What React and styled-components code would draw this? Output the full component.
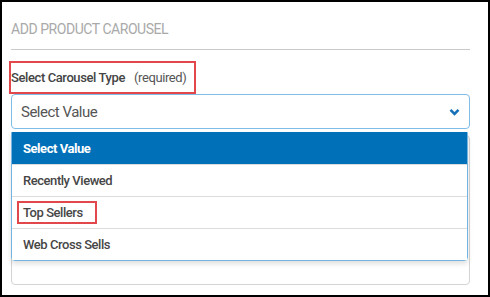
import styled, { createGlobalStyle } from 'styled-components';

const GlobalStyle = createGlobalStyle`
  body {
    margin: 0;
    font-family: Roboto, "Liberation Sans", sans-serif;
    background: #fff;
  }
`;

const Frame = styled.section`
  box-sizing: border-box;
  width: 490px;
  height: 297px;
  border: 2px solid #000;
  padding: 17px 18px 0 9px;
  background: #fff;
`;

const Title = styled.h3`
  margin: 0;
  padding-bottom: 10px;
  border-bottom: 1px solid #c9c9c9;
  font-size: 14px;
  line-height: 20px;
  font-weight: 400;
  letter-spacing: -0.45px;
  color: #a9a9a9;
  text-transform: uppercase;
`;

const Field = styled.div`
  position: relative;
  margin-top: 11px;
`;

const Marked = styled.span`
  display: inline-block;
  border: 2px solid #e2474b;
  padding: ${(p) => p.$pad || '0 8px 0 0'};
  margin-left: ${(p) => p.$shift || '-2px'};
`;

const Label = styled.label`
  display: block;
  font-size: 13px;
  line-height: 29px;
  font-weight: 500;
  letter-spacing: -0.4px;
  color: #444;

  small {
    font-size: 13px;
    font-weight: 400;
    color: #555;
    margin-left: 9px;
  }
`;

const SelectWrap = styled.div`
  position: relative;
`;

const SelectBox = styled.div`
  box-sizing: border-box;
  height: 35px;
  display: flex;
  align-items: center;
  justify-content: space-between;
  padding: 0 9px;
  border: 1px solid #80bde6;
  border-radius: 4px;
  font-size: 15px;
  letter-spacing: -0.5px;
  color: #555;
`;

const Menu = styled.ul`
  position: absolute;
  top: calc(100% + 3px);
  left: 0;
  right: 2px;
  margin: 0;
  padding: 0;
  list-style: none;
  background: #fff;
  border: 1px solid #74b4e0;
  border-radius: 0 0 4px 4px;
  box-shadow: 0 3px 5px rgba(0, 0, 0, 0.12);
  z-index: 2;
`;

const Option = styled.li`
  box-sizing: border-box;
  height: 32px;
  display: flex;
  align-items: center;
  padding-left: 11px;
  font-size: 13px;
  letter-spacing: -0.45px;
  font-weight: ${(p) => (p.$active ? 700 : 500)};
  color: ${(p) => (p.$active ? '#fff' : '#464646')};
  background: ${(p) => (p.$active ? '#0070b9' : '#fff')};
  border-top: ${(p) => (p.$first ? 'none' : '1px solid #dcdcdc')};
  margin-top: ${(p) => (p.$first ? '-1px' : '0')};
`;

const NextInput = styled.div`
  box-sizing: border-box;
  height: 150px;
  margin-top: 6px;
  border: 1px solid #d4d4d4;
  border-radius: 4px;
  box-shadow: inset 0 1px 2px rgba(0, 0, 0, 0.04);
`;

const Chevron = () => (
  <svg width="11" height="8" viewBox="0 0 11 8">
    <polyline
      points="1.5,1.8 5.5,5.8 9.5,1.8"
      fill="none"
      stroke="#1570b8"
      strokeWidth="2.6"
    />
  </svg>
);

const options = ['Select Value', 'Recently Viewed', 'Top Sellers', 'Web Cross Sells'];

export default function App() {
  return (
    <>
      <GlobalStyle />
      <Frame>
        <Title>Add Product Carousel</Title>

        <Field>
          <Marked>
            <Label>
              Select Carousel Type<small>(required)</small>
            </Label>
          </Marked>
          <SelectWrap>
            <SelectBox>
              <span>Select Value</span>
              <Chevron />
            </SelectBox>
            <Menu>
              {options.map((opt, i) => (
                <Option key={opt} $active={i === 0} $first={i === 0}>
                  {opt === 'Top Sellers' ? (
                    <Marked $pad="2px 12px 2px 4px" $shift="-6px">
                      {opt}
                    </Marked>
                  ) : (
                    opt
                  )}
                </Option>
              ))}
            </Menu>
          </SelectWrap>
        </Field>

        <NextInput />
      </Frame>
    </>
  );
}
